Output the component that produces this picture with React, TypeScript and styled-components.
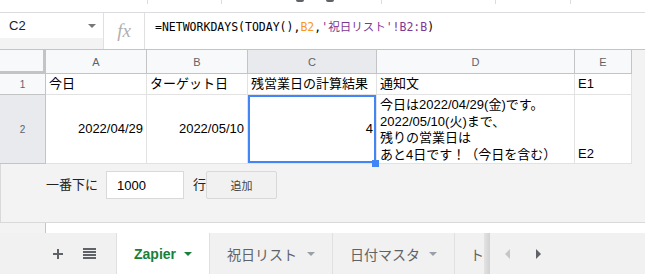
import React from "react";
import styled, { createGlobalStyle } from "styled-components";

const Global = createGlobalStyle`
  body {
    margin: 0;
    background: #fff;
    font-family: "Liberation Sans", "Noto Sans CJK JP", sans-serif;
  }
`;

const Page = styled.div`
  width: 645px;
  height: 274px;
  overflow: hidden;
  display: flex;
  flex-direction: column;
`;

const Toolbar = styled.div`
  height: 12px;
  flex: none;
  display: flex;
  align-items: flex-start;
  border-bottom: 1px solid #dadce0;
`;

const ToolSep = styled.div<{ $ml: number }>`
  width: 1px;
  height: 4px;
  background: #dadce0;
  margin-left: ${(p) => p.$ml}px;
`;

const ToolNub = styled.div<{ $ml: number }>`
  width: 8px;
  height: 2px;
  background: #5f6368;
  margin-left: ${(p) => p.$ml}px;
  border-radius: 0 0 2px 2px;
`;

const FormulaBar = styled.div`
  height: 36px;
  flex: none;
  display: flex;
  border-bottom: 1px solid #c4c4c4;
`;

const NameCol = styled.div`
  width: 103px;
  display: flex;
  flex-direction: column;
  border-right: 1px solid #e0e0e0;
  background: #f3f3f3;
`;

const NameBox = styled.div`
  height: 25px;
  background: #fff;
  display: flex;
  align-items: center;
  justify-content: space-between;
  padding: 0 7px 0 9px;
  font-size: 13px;
  color: #222;
`;

const FxBox = styled.div`
  width: 41px;
  border-right: 1px solid #e0e0e0;
  display: flex;
  justify-content: center;
  padding-top: 7px;
  box-sizing: border-box;
  font-family: "Liberation Serif", serif;
  font-style: italic;
  font-size: 19px;
  color: #b0b0b0;
`;

const Formula = styled.div`
  flex: 1;
  padding: 5px 0 0 10px;
  font-family: "DejaVu Sans Mono", "Noto Sans CJK JP", monospace;
  font-size: 11.5px;
  color: #000;
  white-space: pre;
`;

const Tok = styled.span<{ $c: string }>`
  color: ${(p) => p.$c};
`;

const Grid = styled.div`
  flex: none;
  display: grid;
  grid-template-columns: 46px 101px 101px 129px 198px 57px 1fr;
  grid-template-rows: 24px 21px 69px;
`;

const Corner = styled.div`
  box-sizing: border-box;
  background: #f8f9fa;
  border-right: 3px solid #c4c4c4;
  border-bottom: 3px solid #c4c4c4;
`;

const ColHead = styled.div<{ $active?: boolean }>`
  box-sizing: border-box;
  background: ${(p) => (p.$active ? "#e8eaed" : "#f8f9fa")};
  border-right: 1px solid #c4c4c4;
  border-bottom: 1px solid #c4c4c4;
  display: flex;
  align-items: center;
  justify-content: center;
  font-size: 11px;
  color: #5f6368;
`;

const RowHead = styled.div<{ $active?: boolean }>`
  box-sizing: border-box;
  background: ${(p) => (p.$active ? "#e8eaed" : "#f8f9fa")};
  border-right: 1px solid #c4c4c4;
  border-bottom: 1px solid #c4c4c4;
  display: flex;
  align-items: center;
  justify-content: center;
  font-size: 10px;
  color: #5f6368;
`;

const Cell = styled.div<{
  $align?: "left" | "right";
  $v?: "top" | "middle" | "bottom";
}>`
  box-sizing: border-box;
  position: relative;
  background: #fff;
  border-right: 1px solid #e2e2e2;
  border-bottom: 1px solid #e2e2e2;
  display: flex;
  flex-direction: column;
  justify-content: ${(p) =>
    p.$v === "top" ? "flex-start" : p.$v === "bottom" ? "flex-end" : "center"};
  align-items: ${(p) => (p.$align === "right" ? "flex-end" : "flex-start")};
  padding: ${(p) => (p.$v === "top" ? "2px 3px 0" : p.$v === "bottom" ? "0 3px 1px" : "0 3px")};
  font-size: 13px;
  line-height: 16.5px;
  color: #000;
  white-space: nowrap;
`;

const Beyond = styled.div`
  background: #f3f3f3;
`;

const Selection = styled.div`
  position: absolute;
  inset: 0;
  border: 2px solid #4285f4;
  pointer-events: none;
`;

const Handle = styled.div`
  position: absolute;
  right: -3px;
  bottom: -4px;
  width: 7px;
  height: 7px;
  background: #4285f4;
  z-index: 5;
`;

const AddArea = styled.div`
  height: 59px;
  flex: none;
  box-sizing: border-box;
  background: #f3f3f3;
  border-bottom: 1px solid #d9d9d9;
  border-left: 1px solid #d9d9d9;
  display: flex;
  align-items: flex-start;
  padding: 7px 0 0 45px;
  font-size: 13px;
  color: #222;
`;

const AddLabel = styled.span`
  line-height: 28px;
`;

const RowsInput = styled.div`
  width: 78px;
  height: 28px;
  box-sizing: border-box;
  margin: 0 9px 0 8px;
  background: #fff;
  border: 1px solid #d9d9d9;
  padding-left: 10px;
  display: flex;
  align-items: center;
  font-size: 13px;
  color: #000;
`;

const AddButton = styled.div`
  width: 71px;
  height: 28px;
  box-sizing: border-box;
  background: #f1f1f1;
  border: 1px solid #d9d9d9;
  border-radius: 2px;
  display: flex;
  align-items: center;
  justify-content: center;
  font-size: 11px;
  color: #444;
`;

const StubRow = styled.div`
  height: 10px;
  flex: none;
  display: flex;
`;

const StubHead = styled.div`
  width: 46px;
  box-sizing: border-box;
  background: #f3f3f3;
  border-right: 1px solid #c4c4c4;
`;

const TabBar = styled.div`
  height: 41px;
  flex: none;
  display: flex;
  background: #f1f1f1;
`;

const Controls = styled.div`
  width: 117px;
  flex: none;
  display: flex;
  align-items: center;
  gap: 20px;
  padding-left: 53px;
  box-sizing: border-box;
`;

const Tab = styled.div<{ $w: number; $active?: boolean; $clipped?: boolean }>`
  width: ${(p) => p.$w}px;
  flex: none;
  box-sizing: border-box;
  display: flex;
  align-items: center;
  justify-content: space-between;
  padding: ${(p) => (p.$clipped ? "0 0 0 15px" : "0 17px")};
  overflow: hidden;
  background: ${(p) => (p.$active ? "#fff" : "transparent")};
  border-right: ${(p) => (p.$clipped ? "none" : "1px solid #e0e0e0")};
  box-shadow: ${(p) => (p.$active ? "-1px 0 0 #e0e0e0" : "none")};
  font-size: 14px;
  font-weight: ${(p) => (p.$active ? 700 : 400)};
  color: ${(p) => (p.$active ? "#188038" : "#5f6368")};
  white-space: nowrap;
`;

const Caret = styled.span<{ $c: string }>`
  width: 0;
  height: 0;
  border-left: 4px solid transparent;
  border-right: 4px solid transparent;
  border-top: 4px solid ${(p) => p.$c};
  margin-top: 1px;
`;

const ScrollEdge = styled.div`
  width: 6px;
  flex: none;
  background: linear-gradient(90deg, #e3e3e3, #d2d2d2);
`;

const Arrows = styled.div`
  flex: 1;
  display: flex;
  align-items: center;
  gap: 26px;
  padding-left: 15px;
`;

const Arrow = styled.span<{ $dir: "left" | "right"; $c: string }>`
  width: 0;
  height: 0;
  border-top: 5px solid transparent;
  border-bottom: 5px solid transparent;
  ${(p) =>
    p.$dir === "left"
      ? `border-right: 5px solid ${p.$c};`
      : `border-left: 5px solid ${p.$c};`}
`;

export default function App() {
  return (
    <Page>
      <Global />
      <Toolbar>
        <ToolSep $ml={147} />
        <ToolSep $ml={73} />
        <ToolNub $ml={74} />
        <ToolNub $ml={22} />
        <ToolSep $ml={47} />
        <ToolSep $ml={113} />
        <ToolSep $ml={74} />
      </Toolbar>

      <FormulaBar>
        <NameCol>
          <NameBox>
            C2
            <Caret $c="#777" />
          </NameBox>
        </NameCol>
        <FxBox>fx</FxBox>
        <Formula>
          =NETWORKDAYS(TODAY(),<Tok $c="#f7981d">B2</Tok>,
          <Tok $c="#7e3794">'祝日リスト'!B2:B</Tok>)
        </Formula>
      </FormulaBar>

      <Grid>
        <Corner />
        <ColHead>A</ColHead>
        <ColHead>B</ColHead>
        <ColHead $active>C</ColHead>
        <ColHead>D</ColHead>
        <ColHead>E</ColHead>
        <Beyond />

        <RowHead>1</RowHead>
        <Cell>今日</Cell>
        <Cell>ターゲット日</Cell>
        <Cell>残営業日の計算結果</Cell>
        <Cell>通知文</Cell>
        <Cell>E1</Cell>
        <Beyond />

        <RowHead $active>2</RowHead>
        <Cell $align="right">2022/04/29</Cell>
        <Cell $align="right">2022/05/10</Cell>
        <Cell $align="right">
          4
          <Selection />
          <Handle />
        </Cell>
        <Cell $v="top">
          <span>今日は2022/04/29(金)です。</span>
          <span>2022/05/10(火)まで、</span>
          <span>残りの営業日は</span>
          <span>あと4日です！（今日を含む）</span>
        </Cell>
        <Cell $v="bottom">E2</Cell>
        <Beyond />
      </Grid>

      <AddArea>
        <AddLabel>一番下に</AddLabel>
        <RowsInput>1000</RowsInput>
        <AddLabel>行</AddLabel>
        <AddButton>追加</AddButton>
      </AddArea>

      <StubRow>
        <StubHead />
      </StubRow>

      <TabBar>
        <Controls>
          <svg width="10" height="10" viewBox="0 0 10 10">
            <path d="M5 0v10M0 5h10" stroke="#5f6368" strokeWidth="2" />
          </svg>
          <svg width="13" height="11" viewBox="0 0 13 11">
            <rect x="0" y="0" width="13" height="2" fill="#5f6368" />
            <rect x="0" y="3" width="13" height="2" fill="#5f6368" />
            <rect x="0" y="6" width="13" height="2" fill="#5f6368" />
            <rect x="0" y="9" width="13" height="2" fill="#5f6368" />
          </svg>
        </Controls>
        <Tab $w={93} $active>
          Zapier
          <Caret $c="#188038" />
        </Tab>
        <Tab $w={123}>
          祝日リスト
          <Caret $c="#9aa0a6" />
        </Tab>
        <Tab $w={122}>
          日付マスタ
          <Caret $c="#9aa0a6" />
        </Tab>
        <Tab $w={29} $clipped>
          ト
        </Tab>
        <ScrollEdge />
        <Arrows>
          <Arrow $dir="left" $c="#c6c6c6" />
          <Arrow $dir="right" $c="#5f6368" />
        </Arrows>
      </TabBar>
    </Page>
  );
}
